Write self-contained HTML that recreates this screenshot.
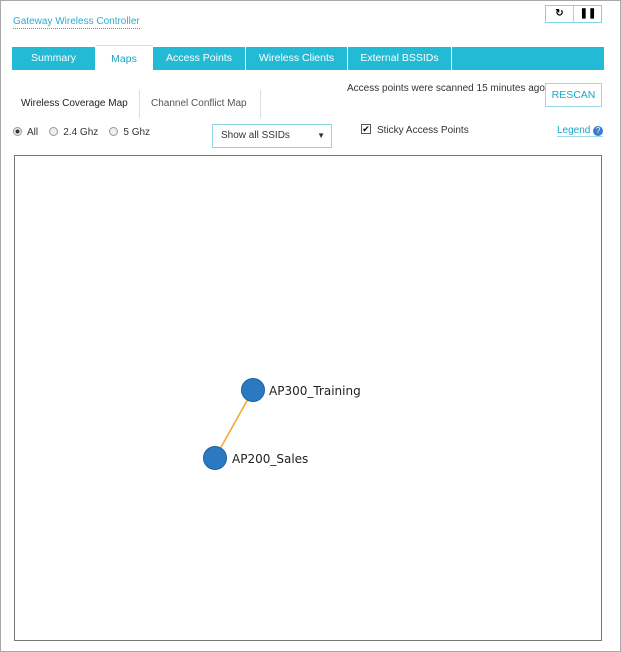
<!DOCTYPE html>
<html><head><style>
*{margin:0;padding:0;box-sizing:border-box}
body{width:621px;height:652px;background:#fff;font-family:"Liberation Sans",sans-serif;position:relative;overflow:hidden}
.frame{position:absolute;left:0;top:0;width:621px;height:652px;border:1px solid #a8a8a8}
.a{position:absolute}
.title{left:13px;top:15px;font-size:10px;color:#2aaecf;border-bottom:1px dotted #2aaecf;line-height:13px}
.btns{left:545px;top:5px;width:57px;height:18px;border:1px solid #7fd3e6}
.btns div{position:absolute;top:0;height:16px;width:28px;text-align:center;font-size:10px;font-weight:bold;line-height:16px}
.tabs{left:12px;top:47px;width:592px;height:23px;background:#23bad6}
.tab{position:absolute;top:0;height:23px;color:#fff;font-size:10.5px;text-align:center;line-height:23px;border-right:1px solid #fff}
.sm{font-size:10px;color:#333}
.rescan{left:545px;top:83px;width:57px;height:24px;border:1px solid #9dd8e8;color:#1aa6c8;font-size:10.5px;text-align:center;line-height:22px}
.radio{display:inline-block;width:9px;height:9px;border:1px solid #999;border-radius:50%;vertical-align:-1px;margin-right:5px;background:#eee}
.dd{left:212px;top:124px;width:120px;height:24px;border:1px solid #8fd6e8;font-size:10px;color:#333;line-height:22px;padding-left:8px}
.map{left:14px;top:155px;width:588px;height:486px;border:1px solid #777}
</style></head><body>
<div class="frame"></div>
<div class="a title">Gateway Wireless Controller</div>
<div class="a btns"><div style="left:0;border-right:1px solid #9dd8e8">&#x21bb;</div><div style="left:28px">&#10074;&#10074;</div></div>
<div class="a tabs">
<div class="tab" style="left:0;width:84px">Summary</div>
<div class="tab" style="left:84px;width:57px;background:#fff;color:#1aa6c8;top:-2px;height:25px;line-height:27px;border-top:1px solid #ddd">Maps</div>
<div class="tab" style="left:141px;width:93px">Access Points</div>
<div class="tab" style="left:234px;width:102px">Wireless Clients</div>
<div class="tab" style="left:336px;width:104px">External BSSIDs</div>
</div>
<div class="a sm" style="left:347px;top:83px">Access points were scanned 15 minutes ago</div>
<div class="a rescan">RESCAN</div>
<div class="a sm" style="left:21px;top:98px;color:#222">Wireless Coverage Map</div>
<div class="a" style="left:139px;top:90px;width:1px;height:28px;background:#ddd"></div>
<div class="a sm" style="left:151px;top:98px;color:#555">Channel Conflict Map</div>
<div class="a" style="left:260px;top:90px;width:1px;height:28px;background:#ddd"></div>
<div class="a sm" style="left:13px;top:127px"><span class="radio" style="background:radial-gradient(#333 35%,#eee 45%)"></span>All &nbsp;&nbsp;&nbsp;<span class="radio"></span>2.4 Ghz &nbsp;&nbsp;&nbsp;<span class="radio"></span>5 Ghz</div>
<div class="a dd">Show all SSIDs<span style="position:absolute;right:6px;font-size:8px">&#9660;</span></div>
<div class="a" style="left:361px;top:124px;width:10px;height:10px;border:1px solid #555;font-size:9px;line-height:8px;text-align:center">&#10004;</div>
<div class="a sm" style="left:377px;top:125px">Sticky Access Points</div>
<div class="a" style="left:557px;top:125px;font-size:10px;color:#1aa6c8;border-bottom:1px solid #9dd8e8">Legend <span style="display:inline-block;width:10px;height:10px;border-radius:50%;background:#3a7bd5;color:#fff;font-size:8px;text-align:center;line-height:10px">?</span></div>
<div class="a map"></div>
<svg class="a" style="left:0;top:0" width="621" height="652">
<line x1="253" y1="390" x2="215" y2="458" stroke="#f5a623" stroke-width="1.5"/>
<circle cx="253" cy="390" r="11.5" fill="#2a79c2" stroke="#1f5f9e"/>
<circle cx="215" cy="458" r="11.5" fill="#2a79c2" stroke="#1f5f9e"/>
<text x="269" y="395" font-family="DejaVu Sans,sans-serif" font-size="12" fill="#222">AP300_Training</text>
<text x="232" y="463" font-family="DejaVu Sans,sans-serif" font-size="12" fill="#222">AP200_Sales</text>
</svg>
</body></html>
